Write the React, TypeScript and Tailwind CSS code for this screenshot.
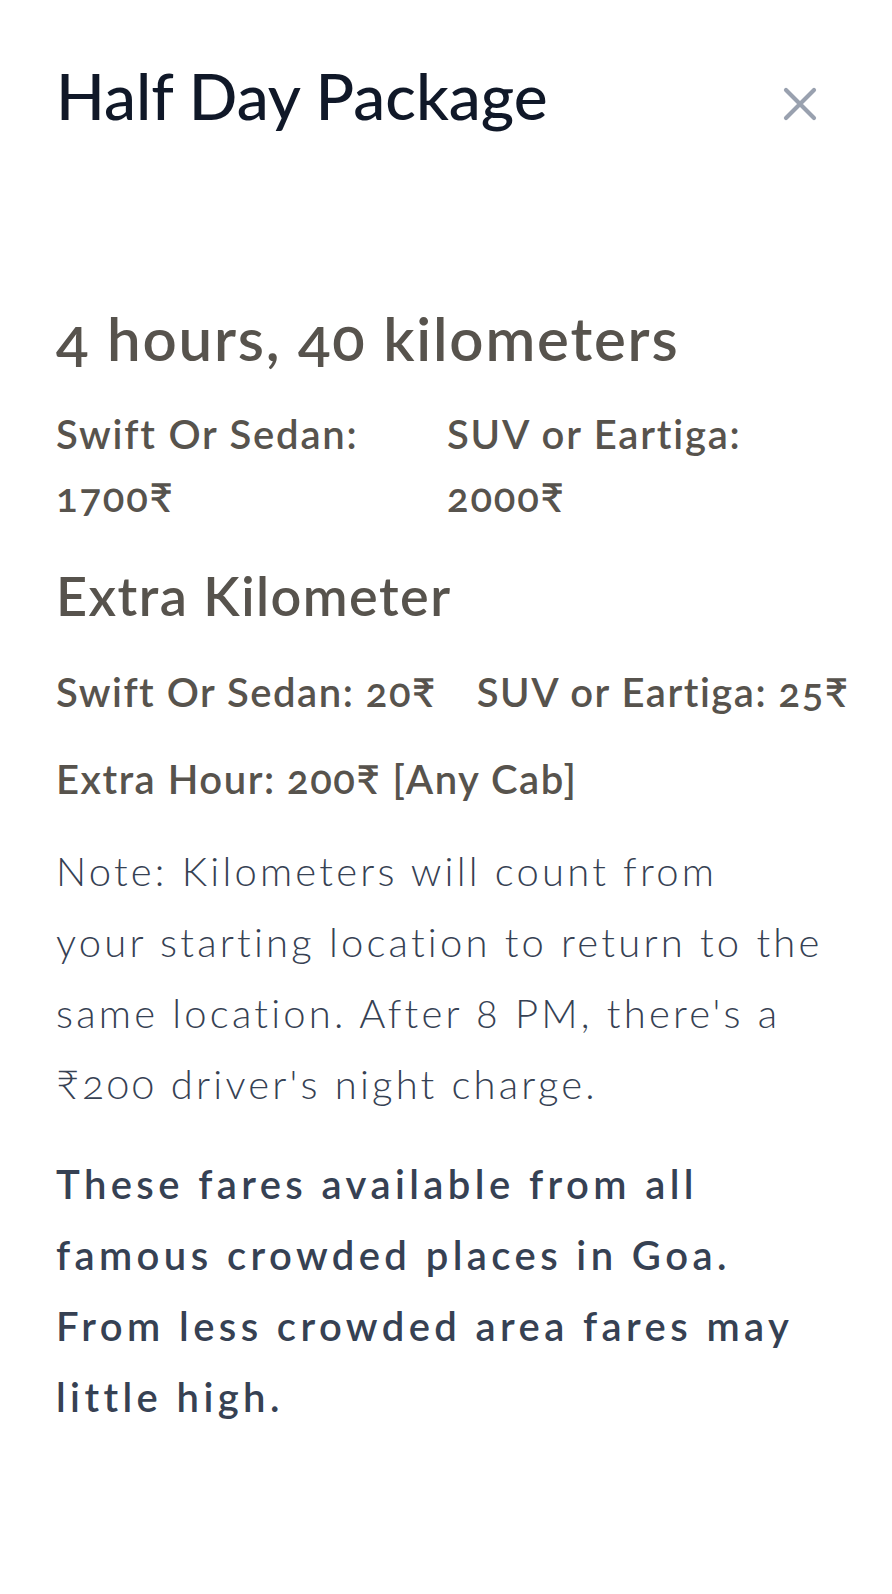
import React from 'react';

const rupee = '₹';

export default function App() {
  return (
    <div className="min-h-screen bg-white font-['Lato','Noto_Sans',sans-serif]">
      <div className="px-[56px]">
        {/* header */}
        <div className="flex items-start justify-between pt-[64px]">
          <h1 className="text-[64px] leading-[64px] font-medium text-gray-900">Half Day Package</h1>
          <button className="mt-[16px] mr-[12px] text-gray-400">
            <svg width="48" height="48" viewBox="0 0 24 24" fill="none" stroke="currentColor" strokeWidth="2.1" strokeLinecap="round">
              <path d="M5 5l14 14M19 5L5 19" />
            </svg>
          </button>
        </div>

        <div className="mt-[174px] text-stone-600 [font-variant-numeric:oldstyle-nums]">
          <h2 className="text-[60px] leading-[72px] font-semibold tracking-[0.03em]">4 hours, 40 kilometers</h2>

          <div className="mt-[29px] grid grid-cols-[391px_1fr] text-[40px] leading-[63px] font-semibold tracking-[0.045em]">
            <p>Swift Or Sedan: 1700{rupee}</p>
            <p>SUV or Eartiga: 2000{rupee}</p>
          </div>

          <h2 className="mt-[35px] text-[54px] leading-[64px] font-semibold tracking-[0.027em]">Extra Kilometer</h2>

          <div className="mt-[33px] flex gap-[40px] whitespace-nowrap text-[40px] leading-[63px] font-semibold tracking-[0.038em]">
            <p>Swift Or Sedan: 20{rupee}</p>
            <p>SUV or Eartiga: 25{rupee}</p>
          </div>

          <p className="mt-[24px] text-[40px] leading-[63px] font-semibold tracking-[0.038em]">Extra Hour: 200{rupee} [Any Cab]</p>
        </div>

        <p className="mt-[25px] text-[40px] leading-[71px] font-light tracking-[0.08em] text-gray-700 [font-variant-numeric:oldstyle-nums]">
          Note: Kilometers will count from
          <br />
          your starting location to return to the same location. After 8 PM, there's a {rupee}200 driver's night charge.
        </p>

        <p className="mt-[29px] pb-[150px] text-[40px] leading-[71px] font-semibold tracking-[0.11em] text-gray-700">
          These fares available from all famous crowded places in Goa. From less crowded area fares may little high.
        </p>
      </div>
    </div>
  );
}
